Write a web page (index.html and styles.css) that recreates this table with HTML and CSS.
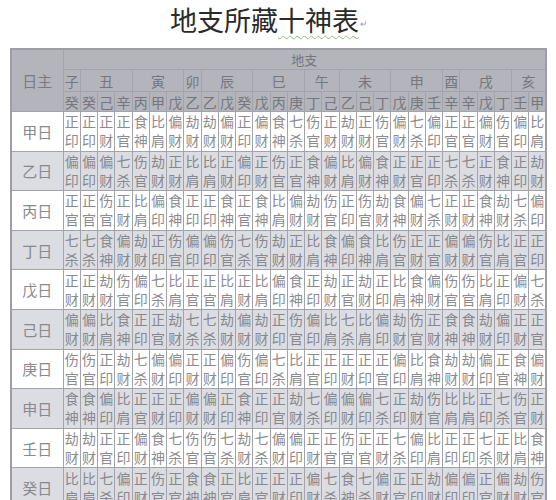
FILE: index.html
```html
<!DOCTYPE html>
<html lang="zh">
<head>
<meta charset="utf-8">
<title>地支所藏十神表</title>
<link rel="stylesheet" href="styles.css">
</head>
<body>
<div class="title">地支所藏<span class="wavy">十神表</span><span class="ret">↵</span></div>
<table class="grid">
<colgroup><col class="lab"><col span="28"></colgroup>
<thead>
<tr class="h1"><td rowspan="3" class="zhu">日主</td><td colspan="28">地支</td></tr>
<tr class="h2"><td>子</td><td colspan="3">丑</td><td colspan="3">寅</td><td>卯</td><td colspan="3">辰</td><td colspan="3">巳</td><td colspan="2">午</td><td colspan="3">未</td><td colspan="3">申</td><td>酉</td><td colspan="3">戌</td><td colspan="2">亥</td></tr>
<tr class="h3"><td>癸</td><td>癸</td><td>己</td><td>辛</td><td>丙</td><td>甲</td><td>戊</td><td>乙</td><td>乙</td><td>戊</td><td>癸</td><td>戊</td><td>丙</td><td>庚</td><td>丁</td><td>己</td><td>乙</td><td>己</td><td>丁</td><td>戊</td><td>庚</td><td>壬</td><td>辛</td><td>辛</td><td>戊</td><td>丁</td><td>壬</td><td>甲</td></tr>
</thead>
<tbody>
<tr><th>甲日</th><td>正<br>印</td><td>正<br>印</td><td>正<br>财</td><td>正<br>官</td><td>食<br>神</td><td>比<br>肩</td><td>偏<br>财</td><td>劫<br>财</td><td>劫<br>财</td><td>偏<br>财</td><td>正<br>印</td><td>偏<br>财</td><td>食<br>神</td><td>七<br>杀</td><td>伤<br>官</td><td>正<br>财</td><td>劫<br>财</td><td>正<br>财</td><td>伤<br>官</td><td>偏<br>财</td><td>七<br>杀</td><td>偏<br>印</td><td>正<br>官</td><td>正<br>官</td><td>偏<br>财</td><td>伤<br>官</td><td>偏<br>印</td><td>比<br>肩</td></tr>
<tr class="alt"><th>乙日</th><td>偏<br>印</td><td>偏<br>印</td><td>偏<br>财</td><td>七<br>杀</td><td>伤<br>官</td><td>劫<br>财</td><td>正<br>财</td><td>比<br>肩</td><td>比<br>肩</td><td>正<br>财</td><td>偏<br>印</td><td>正<br>财</td><td>伤<br>官</td><td>正<br>官</td><td>食<br>神</td><td>偏<br>财</td><td>比<br>肩</td><td>偏<br>财</td><td>食<br>神</td><td>正<br>财</td><td>正<br>官</td><td>正<br>印</td><td>七<br>杀</td><td>七<br>杀</td><td>正<br>财</td><td>食<br>神</td><td>正<br>印</td><td>劫<br>财</td></tr>
<tr><th>丙日</th><td>正<br>官</td><td>正<br>官</td><td>伤<br>官</td><td>正<br>财</td><td>比<br>肩</td><td>偏<br>印</td><td>食<br>神</td><td>正<br>印</td><td>正<br>印</td><td>食<br>神</td><td>正<br>官</td><td>食<br>神</td><td>比<br>肩</td><td>偏<br>财</td><td>劫<br>财</td><td>伤<br>官</td><td>正<br>印</td><td>伤<br>官</td><td>劫<br>财</td><td>食<br>神</td><td>偏<br>财</td><td>七<br>杀</td><td>正<br>财</td><td>正<br>财</td><td>食<br>神</td><td>劫<br>财</td><td>七<br>杀</td><td>偏<br>印</td></tr>
<tr class="alt"><th>丁日</th><td>七<br>杀</td><td>七<br>杀</td><td>食<br>神</td><td>偏<br>财</td><td>劫<br>财</td><td>正<br>印</td><td>伤<br>官</td><td>偏<br>印</td><td>偏<br>印</td><td>伤<br>官</td><td>七<br>杀</td><td>伤<br>官</td><td>劫<br>财</td><td>正<br>财</td><td>比<br>肩</td><td>食<br>神</td><td>偏<br>印</td><td>食<br>神</td><td>比<br>肩</td><td>伤<br>官</td><td>正<br>财</td><td>正<br>官</td><td>偏<br>财</td><td>偏<br>财</td><td>伤<br>官</td><td>比<br>肩</td><td>正<br>官</td><td>正<br>印</td></tr>
<tr><th>戊日</th><td>正<br>财</td><td>正<br>财</td><td>劫<br>财</td><td>伤<br>官</td><td>偏<br>印</td><td>七<br>杀</td><td>比<br>肩</td><td>正<br>官</td><td>正<br>官</td><td>比<br>肩</td><td>正<br>财</td><td>比<br>肩</td><td>偏<br>印</td><td>食<br>神</td><td>正<br>印</td><td>劫<br>财</td><td>正<br>官</td><td>劫<br>财</td><td>正<br>印</td><td>比<br>肩</td><td>食<br>神</td><td>偏<br>财</td><td>伤<br>官</td><td>伤<br>官</td><td>比<br>肩</td><td>正<br>印</td><td>偏<br>财</td><td>七<br>杀</td></tr>
<tr class="alt"><th>己日</th><td>偏<br>财</td><td>偏<br>财</td><td>比<br>肩</td><td>食<br>神</td><td>正<br>印</td><td>正<br>官</td><td>劫<br>财</td><td>七<br>杀</td><td>七<br>杀</td><td>劫<br>财</td><td>偏<br>财</td><td>劫<br>财</td><td>正<br>印</td><td>伤<br>官</td><td>偏<br>印</td><td>比<br>肩</td><td>七<br>杀</td><td>比<br>肩</td><td>偏<br>印</td><td>劫<br>财</td><td>伤<br>官</td><td>正<br>财</td><td>食<br>神</td><td>食<br>神</td><td>劫<br>财</td><td>偏<br>印</td><td>正<br>财</td><td>正<br>官</td></tr>
<tr><th>庚日</th><td>伤<br>官</td><td>伤<br>官</td><td>正<br>印</td><td>劫<br>财</td><td>七<br>杀</td><td>偏<br>财</td><td>偏<br>印</td><td>正<br>财</td><td>正<br>财</td><td>偏<br>印</td><td>伤<br>官</td><td>偏<br>印</td><td>七<br>杀</td><td>比<br>肩</td><td>正<br>官</td><td>正<br>印</td><td>正<br>财</td><td>正<br>印</td><td>正<br>官</td><td>偏<br>印</td><td>比<br>肩</td><td>食<br>神</td><td>劫<br>财</td><td>劫<br>财</td><td>偏<br>印</td><td>正<br>官</td><td>食<br>神</td><td>偏<br>财</td></tr>
<tr class="alt"><th>申日</th><td>食<br>神</td><td>食<br>神</td><td>偏<br>印</td><td>比<br>肩</td><td>正<br>官</td><td>正<br>财</td><td>正<br>印</td><td>偏<br>财</td><td>偏<br>财</td><td>正<br>印</td><td>食<br>神</td><td>正<br>印</td><td>正<br>官</td><td>劫<br>财</td><td>七<br>杀</td><td>偏<br>印</td><td>偏<br>财</td><td>偏<br>印</td><td>七<br>杀</td><td>正<br>印</td><td>劫<br>财</td><td>伤<br>官</td><td>比<br>肩</td><td>比<br>肩</td><td>正<br>印</td><td>七<br>杀</td><td>伤<br>官</td><td>正<br>财</td></tr>
<tr><th>壬日</th><td>劫<br>财</td><td>劫<br>财</td><td>正<br>官</td><td>正<br>印</td><td>偏<br>财</td><td>食<br>神</td><td>七<br>杀</td><td>伤<br>官</td><td>伤<br>官</td><td>七<br>杀</td><td>劫<br>财</td><td>七<br>杀</td><td>偏<br>财</td><td>偏<br>印</td><td>正<br>财</td><td>正<br>官</td><td>伤<br>官</td><td>正<br>官</td><td>正<br>财</td><td>七<br>杀</td><td>偏<br>印</td><td>比<br>肩</td><td>正<br>印</td><td>正<br>印</td><td>七<br>杀</td><td>正<br>财</td><td>比<br>肩</td><td>食<br>神</td></tr>
<tr class="alt"><th>癸日</th><td>比<br>肩</td><td>比<br>肩</td><td>七<br>杀</td><td>偏<br>印</td><td>正<br>财</td><td>伤<br>官</td><td>正<br>官</td><td>食<br>神</td><td>食<br>神</td><td>正<br>官</td><td>比<br>肩</td><td>正<br>官</td><td>正<br>财</td><td>正<br>印</td><td>偏<br>财</td><td>七<br>杀</td><td>食<br>神</td><td>七<br>杀</td><td>偏<br>财</td><td>正<br>官</td><td>正<br>印</td><td>劫<br>财</td><td>偏<br>印</td><td>偏<br>印</td><td>正<br>官</td><td>偏<br>财</td><td>劫<br>财</td><td>伤<br>官</td></tr>
</tbody>
</table>
</body>
</html>
```

FILE: styles.css
```css
html, body {
  margin: 0;
  padding: 0;
  background: #ffffff;
  font-family: "Noto Sans CJK SC", "Noto Sans", sans-serif;
}

.title {
  box-sizing: border-box;
  height: 48px;
  padding: 5px 0 0 170px;
  font-size: 27px;
  line-height: 30px;
  color: #2a2a2a;
  white-space: nowrap;
}

.wavy {
  text-decoration: underline wavy #8cc07a;
  text-decoration-thickness: 1px;
  text-underline-offset: 4px;
}

.ret {
  font-size: 9px;
  color: #9a9a9a;
  vertical-align: 4px;
  margin-left: 1px;
}

.grid {
  margin-left: 10px;
  width: 537px;
  table-layout: fixed;
  border-collapse: collapse;
  border: 2px solid #9c9da5;
}

.grid col.lab {
  width: 52px;
}

.grid td,
.grid th {
  border: 1px solid #a3a4ab;
  padding: 0;
  text-align: center;
  font-weight: normal;
  overflow: hidden;
}

.grid thead td {
  background: #b3b4bc;
  color: #76777d;
  font-size: 14px;
  line-height: 18px;
}

.grid .h1 td {
  height: 19px;
  font-size: 13px;
}

.grid .h2 td {
  height: 21px;
}

.grid .h3 td {
  height: 19px;
}

.grid thead td.zhu {
  font-size: 15px;
  color: #7a7b81;
}

.grid tbody td {
  height: 38.6px;
  font-size: 14px;
  line-height: 19px;
  color: #8c8c90;
  background: #ffffff;
}

.grid tbody th {
  font-size: 15px;
  color: #8a8a8e;
  background: #ffffff;
}

.grid tbody tr.alt td,
.grid tbody tr.alt th {
  background: #dcdde2;
  color: #88888d;
}
```
